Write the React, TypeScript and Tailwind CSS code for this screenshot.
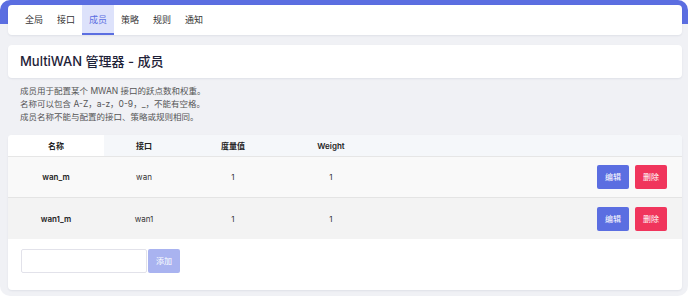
const tabs = ["全局", "接口", "成员", "策略", "规则", "通知"];

const members = [
  { name: "wan_m", iface: "wan", metric: "1", weight: "1", bg: "bg-[#f9f9f9]" },
  { name: "wan1_m", iface: "wan1", metric: "1", weight: "1", bg: "bg-[#f3f3f3]" },
];

const cardClassName = "rounded-[4px] bg-white shadow-[0_1px_2px_rgba(30,40,80,0.08)]";

export default function App() {
  return (
    <div className="h-[299px] w-[690px] bg-white font-['Inter','Noto_Sans_CJK_SC',sans-serif]">
      <div className="flex h-[296px] w-[688px] flex-col overflow-hidden rounded-[10px] bg-[linear-gradient(#5b6ee1_24px,#f0f1f5_24px)] px-[8px] pt-[5px]">
        {/* tabs */}
        <div className={`${cardClassName} flex h-[30px] w-[674px] px-[10px]`}>
          {tabs.map((tab) => (
            <div
              key={tab}
              className={
                tab === "成员"
                  ? "flex w-[32px] items-center justify-center border-b-2 border-[#5b6ee1] bg-[#dde2fb] pt-[2px] text-[9px] text-[#5b6ee1]"
                  : "flex w-[32px] items-center justify-center text-[9px] text-[#333]"
              }
            >
              {tab}
            </div>
          ))}
        </div>

        <div className={`${cardClassName} mt-[10px] flex h-[33px] w-[674px] items-center px-[12px]`}>
          <h1 className="text-[13px] font-medium text-[#1e2238]">MultiWAN 管理器 - 成员</h1>
        </div>

        <div className="mt-[7px] px-[12px] text-[8.5px] leading-[13px] text-[#555]">
          <p>成员用于配置某个 MWAN 接口的跃点数和权重。</p>
          <p>名称可以包含 A-Z，a-z，0-9，_，不能有空格。</p>
          <p>成员名称不能与配置的接口、策略或规则相同。</p>
        </div>

        <div className={`${cardClassName} mt-[11px] w-[674px] overflow-hidden`}>
          <div className="flex h-[22px] items-center border-b border-[#e6e6e6] bg-[#f5f7fa] text-[8px] font-semibold text-[#222]">
            <div className="flex h-full w-[96px] items-center justify-center bg-white">名称</div>
            <div className="w-[80px] text-center">接口</div>
            <div className="w-[98px] text-center">度量值</div>
            <div className="w-[98px] text-center">Weight</div>
          </div>
          {members.map((m, i) => (
            <div
              key={m.name}
              className={`flex h-[41px] items-center text-[8px] text-[#333] ${m.bg} ${i === 0 ? "border-b border-[#e4e4e4]" : ""}`}
            >
              <div className="w-[96px] text-center font-semibold text-[#222]">{m.name}</div>
              <div className="w-[80px] text-center">{m.iface}</div>
              <div className="w-[98px] text-center">{m.metric}</div>
              <div className="w-[98px] text-center">{m.weight}</div>
              <div className="flex flex-1 justify-end gap-[6px] pr-[15px]">
                <button className="h-[24px] w-[32px] rounded-[2px] bg-[#5b6ee1] text-[8px] text-white">编辑</button>
                <button className="h-[24px] w-[32px] rounded-[2px] bg-[#f0355c] text-[8px] text-white">删除</button>
              </div>
            </div>
          ))}
          <div className="flex h-[51px] items-start gap-[1px] px-[13px] pt-[10px]">
            <input className="h-[24px] w-[126px] rounded-[2px] border border-[#e2e2ea] bg-white outline-none" />
            <button className="h-[24px] w-[32px] rounded-[2px] bg-[#a9b3f0] text-[8px] text-white">添加</button>
          </div>
        </div>
      </div>
    </div>
  );
}
